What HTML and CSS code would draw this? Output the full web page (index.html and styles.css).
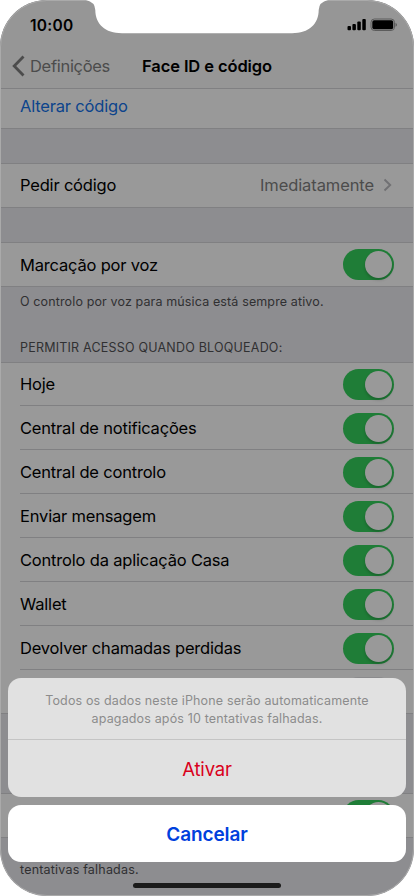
FILE: index.html
```html
<!DOCTYPE html>
<html lang="pt">
<head>
<meta charset="utf-8">
<title>Face ID e código</title>
<link rel="stylesheet" href="styles.css">
</head>
<body>
<div class="phone">
  <header class="top">
    <div class="status">
      <span class="time">10:00</span>
      <svg class="signals" width="50" height="14" viewBox="0 0 50 14">
        <rect x="0.5" y="8" width="3.5" height="4.2" rx="1"/>
        <rect x="5.4" y="6" width="3.5" height="6.2" rx="1"/>
        <rect x="10.3" y="3.5" width="3.5" height="8.7" rx="1"/>
        <rect x="15.3" y="1" width="3.5" height="11.2" rx="1"/>
        <rect x="24" y="1" width="23.5" height="11.5" rx="3.4" fill="none" stroke="#5c5c5c"/>
        <rect x="25.3" y="2.2" width="20.900" height="9.1" rx="1.8"/>
        <path d="M48.5 4.7Q50 5.5 50 6.8T48.5 8.8Z" fill="#5c5c5c"/>
      </svg>
    </div>
    <nav class="nav">
      <svg class="back" width="14" height="22" viewBox="0 0 14 22"><path d="M11.5 1.500 2.2 11l9.3 9.500" fill="none" stroke="#4c4c4c" stroke-width="2.8"/></svg>
      <span class="back-label">Definições</span>
      <h1>Face ID e código</h1>
    </nav>
  </header>
  <main>
    <section class="first"><div class="row link"><span>Alterar código</span></div></section>
    <section class="group code"><div class="row"><span>Pedir código</span><span class="value">Imediatamente</span><svg class="chevron" width="9" height="14" viewBox="0 0 9 14"><path d="m1.5 1.5 5.7 5.5-5.7 5.5" fill="none" stroke="#707073" stroke-width="1.9"/></svg></div></section>
    <section class="group"><div class="row"><span>Marcação por voz</span><i class="switch"></i></div></section>
    <p class="note">O controlo por voz para música está sempre ativo.</p>
    <h2>PERMITIR ACESSO QUANDO BLOQUEADO:</h2>
    <section class="group access">
      <div class="row"><span>Hoje</span><i class="switch"></i></div>
      <div class="row"><span>Central de notificações</span><i class="switch"></i></div>
      <div class="row"><span>Central de controlo</span><i class="switch"></i></div>
      <div class="row"><span>Enviar mensagem</span><i class="switch"></i></div>
      <div class="row"><span>Controlo da aplicação Casa</span><i class="switch"></i></div>
      <div class="row"><span>Wallet</span><i class="switch"></i></div>
      <div class="row"><span>Devolver chamadas perdidas</span><i class="switch"></i></div>
      <div class="row"><i class="switch off"></i></div>
    </section>
    <section class="group erase"><div class="row"><i class="switch"></i></div></section>
    <p class="tail">tentativas falhadas.</p>
  </main>
  <div class="edge"></div>
</div>
<svg class="notch" width="254" height="35" viewBox="0 0 254 35"><path d="M4 0Q13 2 13.300 10C13.300 24 23 33.200 40 33.200H210C227 33.200 236.700 24 236.700 10Q237 2 246 0Z" fill="#fff"/></svg>
<div class="actions">
  <div class="sheet">
    <p class="message">Todos os dados neste iPhone serão automaticamente<br>apagados após 10 tentativas falhadas.</p>
    <div class="activate"><span>Ativar</span></div>
  </div>
  <div class="cancel"><span>Cancelar</span></div>
</div>
<div class="home"></div>
</body>
</html>
```
FILE: styles.css
```css
* { box-sizing: border-box; }
body { margin: 0; width: 414px; height: 896px; overflow: hidden; position: relative; background: #fff; font-family: Inter, sans-serif; font-size: 16.5px; letter-spacing: -0.19px; color: #000; }
.phone { position: relative; width: 414px; height: 896px; overflow: hidden; border-radius: 47px; background: #8d8d90; }
.edge { position: absolute; inset: 0; border: 1px solid #aaa; border-radius: 47px; }
.top { height: 89px; background: #969696; border-bottom: 1px solid #808082; }
.status { height: 44px; padding: 3px 17px 0 30px; display: flex; align-items: center; justify-content: space-between; }
.time { font-size: 15.5px; font-weight: 600; letter-spacing: 0.25px; margin-top: 3px; }
.signals { margin-top: 3px; }
.nav { height: 44px; display: flex; align-items: center; padding-left: 12px; }
.back-label { width: 80px; margin-left: 4px; color: #4c4c4c; letter-spacing: -0.3px; }
h1 { margin: 0 0 0 32px; font-size: 16.5px; font-weight: 600; letter-spacing: -0.1px; white-space: nowrap; }
.first { height: 40px; background: #999; border-bottom: 1px solid #808082; padding-left: 20px; }
.first .row { height: 34px; color: #0c448c; }
.row { height: 44px; display: flex; align-items: center; padding-right: 20px; white-space: nowrap; }
.group { background: #999; border: solid #808082; border-width: 1px 0; padding-left: 20px; margin-top: 34px; }
.group .row { height: 43px; }
.code .row { padding-right: 22px; padding-bottom: 1px; }
.value { margin-left: auto; color: #4c4c4c; letter-spacing: -0.1px; }
.chevron { margin-left: 9px; }
.switch { flex: none; width: 51px; height: 31px; margin-left: auto; border-radius: 16px; background: #1f7d37; padding: 2px; }
.switch::before { content: ""; display: block; width: 27px; height: 27px; margin-left: 20px; border-radius: 50%; background: #999; box-shadow: 0 2px 3px #0003; }
.switch.off { background: #8b8b8d; }
.switch.off::before { margin-left: 0; }
.note, h2, .tail { margin: 0; font-size: 12.5px; line-height: 16px; font-weight: 400; letter-spacing: 0.13px; color: #303032; padding-left: 20px; }
.note { padding-top: 7px; }
h2 { padding-top: 30px; letter-spacing: 0.21px; }
.access { margin-top: 6px; }
.access .row { height: 44px; border-bottom: 1px solid #808082; }
.access .row:first-child { height: 43px; }
.access .row:last-child { height: 43px; border: 0; }
.access .switch { position: relative; top: 0.5px; }
.erase { margin-top: 79px; }
.tail { padding-top: 24px; letter-spacing: 0.2px; }
.notch { position: absolute; left: 82px; top: 0; }
.actions { position: absolute; left: 8px; right: 8px; top: 677.5px; text-align: center; }
.sheet { height: 119.5px; border-radius: 13px; background: #e1e1e1; overflow: hidden; }
.message { margin: 0; height: 62.5px; padding-top: 14px; border-bottom: 1px solid #c4c4c4; color: #8c8c8c; font-size: 12.5px; line-height: 18px; letter-spacing: 0.15px; }
.activate { height: 57px; display: flex; align-items: center; justify-content: center; color: #d9001b; font-size: 18.500px; padding-top: 1px; }
.cancel { height: 57px; margin-top: 8px; border-radius: 13px; background: #fff; display: flex; align-items: center; justify-content: center; color: #0040dd; font-weight: 600; font-size: 19px; letter-spacing: -0.1px; padding-top: 1px; }
.home { position: absolute; left: 133px; top: 883px; width: 148px; height: 5px; border-radius: 3px; background: #1b1b1b; }
```
